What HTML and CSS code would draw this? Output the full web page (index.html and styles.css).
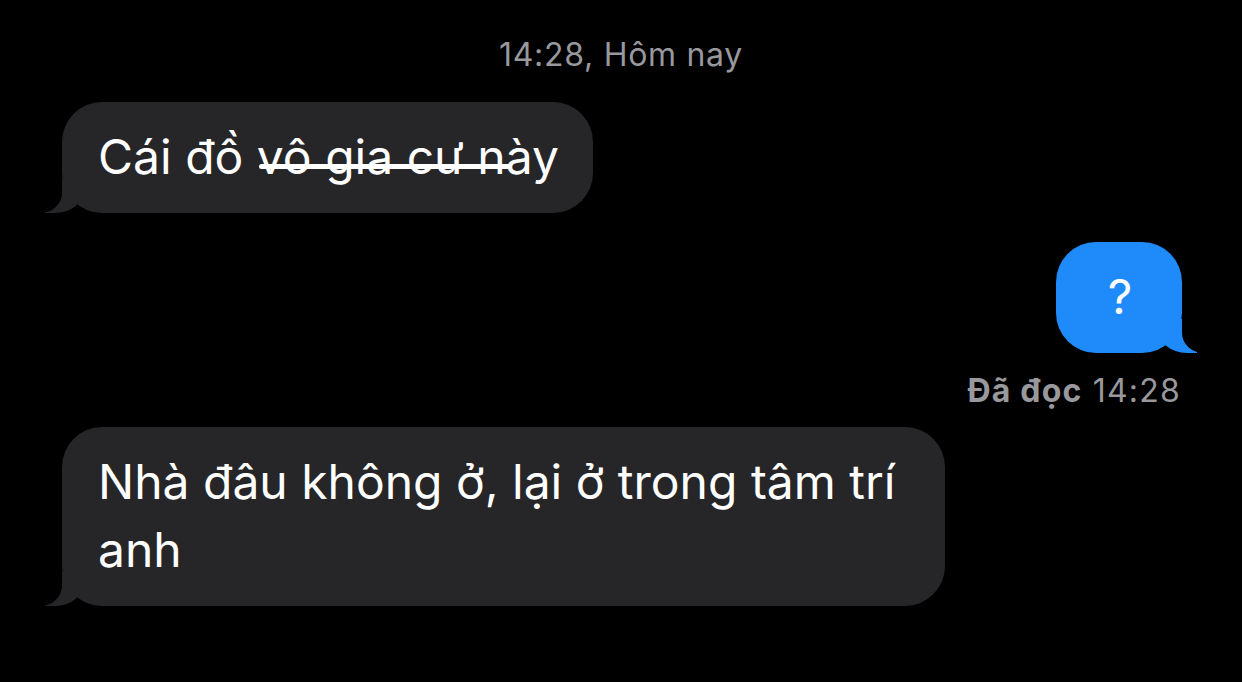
FILE: index.html
```html
<!DOCTYPE html>
<html lang="vi">
<head>
  <meta charset="UTF-8">
  <title>Tin nhắn</title>
  <meta name="viewport" content="width=device-width, initial-scale=1.0">
  <link rel="stylesheet" href="styles.css">
</head>
<body>
  <div class="thread">
    <div class="stamp">14:28, Hôm nay</div>
    <div class="row">
      <div class="bubble in">Cái đồ <span class="scribble">vô gia cư n</span>ày</div>
    </div>
    <div class="row out-row">
      <div class="bubble out">?</div>
    </div>
    <div class="receipt"><b>Đã đọc</b> 14:28</div>
    <div class="row">
      <div class="bubble in wide">Nhà đâu không ở, lại ở trong tâm trí anh</div>
    </div>
  </div>
</body>
</html>
```

FILE: styles.css
```css
html, body {
  margin: 0;
  padding: 0;
  background: #000;
}
body {
  font-family: Inter, "Noto Sans", sans-serif;
  color: #fff;
  width: 1242px;
  height: 682px;
  overflow: hidden;
}
.thread {
  display: flex;
  flex-direction: column;
  padding: 36px 60px 0 62px;
}
.stamp {
  text-align: center;
  font-size: 32px;
  letter-spacing: 0.7px;
  color: #98989d;
  line-height: 38px;
  margin-left: -2px;
}
.row {
  display: flex;
  margin-top: 28px;
}
.out-row {
  justify-content: flex-end;
  margin-top: 29px;
}
.bubble {
  position: relative;
  font-size: 48px;
  line-height: 68px;
  padding: 21px 34px 22px 36px;
  border-radius: 40px;
}
.bubble.in {
  background: #262628;
}
.bubble.wide {
  width: 813px;
}
.bubble.out {
  background: #1f8bfa;
  width: 56px;
  text-align: center;
}
/* tails */
.bubble::before,
.bubble::after {
  content: "";
  position: absolute;
  bottom: 0;
  height: 34px;
}
.bubble.in::before {
  left: -17px;
  width: 40px;
  background: #262628;
  border-bottom-right-radius: 30px 26px;
}
.bubble.in::after {
  left: -40px;
  width: 40px;
  background: #000;
  border-bottom-right-radius: 22px 20px;
}
.bubble.out::before {
  right: -15px;
  width: 40px;
  background: #1f8bfa;
  border-bottom-left-radius: 30px 26px;
}
.bubble.out::after {
  right: -40px;
  width: 40px;
  background: #000;
  border-bottom-left-radius: 22px 20px;
}
.scribble {
  position: relative;
}
.scribble::after {
  content: "";
  position: absolute;
  left: 2px;
  right: -6px;
  top: 37px;
  height: 5px;
  border-radius: 3px;
  background: #fff;
}
.receipt {
  align-self: flex-end;
  font-size: 32px;
  letter-spacing: 1.2px;
  line-height: 38px;
  color: #98989d;
  margin-top: 19px;
  margin-right: 1px;
}
.receipt b {
  font-weight: 700;
}
.receipt + .row {
  margin-top: 17px;
}
```
